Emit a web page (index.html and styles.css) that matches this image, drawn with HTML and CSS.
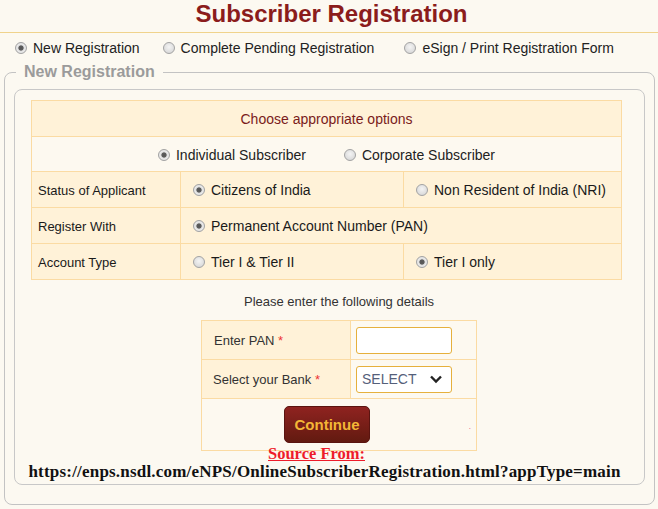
FILE: index.html
```html
<!DOCTYPE html>
<html lang="en">
<head>
<meta charset="utf-8">
<title>Subscriber Registration</title>
<link rel="stylesheet" href="styles.css">
</head>
<body>
<h1 class="title">Subscriber Registration</h1>
<div class="modes">
  <label class="opt m1"><input type="radio" name="mode" checked><span>New Registration</span></label>
  <label class="opt m2"><input type="radio" name="mode"><span>Complete Pending Registration</span></label>
  <label class="opt"><input type="radio" name="mode"><span>eSign / Print Registration Form</span></label>
</div>
<fieldset class="outer">
  <legend>New Registration</legend>
  <div class="inner">
    <table class="opts">
      <colgroup><col class="c1"><col class="c2"><col class="c3"></colgroup>
      <tr class="head"><td colspan="3">Choose appropriate options</td></tr>
      <tr class="light"><td colspan="3">
        <div class="pair">
          <label class="opt"><input type="radio" name="sub" checked><span>Individual Subscriber</span></label>
          <label class="opt"><input type="radio" name="sub"><span>Corporate Subscriber</span></label>
        </div>
      </td></tr>
      <tr>
        <td class="lbl">Status of Applicant</td>
        <td class="cho"><label class="opt"><input type="radio" name="st" checked><span>Citizens of India</span></label></td>
        <td class="cho"><label class="opt"><input type="radio" name="st"><span>Non Resident of India (NRI)</span></label></td>
      </tr>
      <tr>
        <td class="lbl">Register With</td>
        <td class="cho" colspan="2"><label class="opt"><input type="radio" name="rw" checked><span>Permanent Account Number (PAN)</span></label></td>
      </tr>
      <tr>
        <td class="lbl">Account Type</td>
        <td class="cho"><label class="opt"><input type="radio" name="at"><span>Tier I &amp; Tier II</span></label></td>
        <td class="cho"><label class="opt"><input type="radio" name="at" checked><span>Tier I only</span></label></td>
      </tr>
    </table>
    <div class="details">
      <p class="hint">Please enter the following details</p>
      <table class="pan">
        <colgroup><col class="p1"><col class="p2"></colgroup>
        <tr>
          <td class="plbl">Enter PAN <span class="req">*</span></td>
          <td class="pfld"><input class="txt" type="text"></td>
        </tr>
        <tr>
          <td class="plbl sb">Select your Bank <span class="req">*</span></td>
          <td class="pfld">
            <div class="sel"><span>SELECT</span>
              <svg width="14" height="10" viewBox="0 0 14 10"><path d="M2 2.5 L7 7.5 L12 2.5" fill="none" stroke="#222" stroke-width="2.4"/></svg>
            </div>
          </td>
        </tr>
        <tr class="btnrow">
          <td colspan="2"><div class="btnwrap"><button class="go" type="button">Continue</button><span class="dot">.</span></div></td>
        </tr>
      </table>
    </div>
    <p class="src"><u>Source From:</u></p>
    <p class="url">https://enps.nsdl.com/eNPS/OnlineSubscriberRegistration.html?appType=main</p>
  </div>
</fieldset>
</body>
</html>
```
FILE: styles.css
```css
html, body {
  margin: 0;
  background: #fcf9f1;
  font-family: "Liberation Sans", Arial, sans-serif;
  color: #222;
}
.title {
  margin: 0;
  font-size: 24px;
  line-height: 28px;
  font-weight: bold;
  text-align: center;
  color: #8b1c1c;
  padding: 0 0 4px 5px;
  border-bottom: 1px solid #f0d38c;
}
.modes {
  display: flex;
  align-items: center;
  height: 22px;
  margin-top: 4px;
  padding-left: 15px;
  font-size: 14px;
}
.opt {
  display: inline-flex;
  align-items: center;
  gap: 6px;
  white-space: nowrap;
}
.m1 { margin-right: 23px; }
.m2 { margin-right: 30px; }
input[type="radio"] {
  -webkit-appearance: none;
  appearance: none;
  margin: 0;
  width: 12px;
  height: 12px;
  border: 1px solid #a3a3a3;
  border-radius: 50%;
  background: radial-gradient(circle at 50% 40%, #f4f4f4 0, #dcdcdc 70%, #cfcfcf 100%);
  box-sizing: border-box;
  flex: none;
}
input[type="radio"]:checked {
  background: radial-gradient(circle, #555 0, #5d5d5d 2.2px, #d9d9d9 3px, #ececec 4px, #d0d0d0 100%);
}
.outer {
  margin: 4px 3px 0 4px;
  border: 1px solid #c3c3c3;
  border-radius: 8px;
  padding: 8px 9px 19px;
  min-width: 0;
}
.outer legend {
  margin-left: 2px;
  padding: 0 8px;
  font-size: 16px;
  line-height: 18px;
  font-weight: bold;
  color: #9b9b9b;
}
.inner {
  border: 1px solid #c8c8c8;
  border-radius: 8px;
  padding: 10px 14px 2px 16px;
}
.opts {
  width: 591px;
  border-collapse: collapse;
  table-layout: fixed;
}
.opts td, .pan td {
  border: 1px solid #fbdba3;
  background: #fff2d8;
  padding: 0;
}
.c1 { width: 149px; }
.c2 { width: 223px; }
.opts tr { height: 36px; }
.opts tr.head { height: 36px; }
.opts tr.light { height: 35px; }
.opts .head td {
  text-align: center;
  font-size: 14px;
  color: #7a1b1b;
}
.opts .light td {
  background: #fdf9f0;
}
.pair {
  display: flex;
  justify-content: center;
  gap: 38px;
  font-size: 14px;
  padding-top: 1px;
}
.lbl {
  font-size: 13px;
  padding: 1px 0 0 6px !important;
  color: #1a1a1a;
}
.cho {
  font-size: 14px;
  padding: 2px 0 0 12px !important;
  color: #1a1a1a;
}
.details {
  width: 276px;
  margin-left: 170px;
}
.hint {
  margin: 14px 0 10px;
  font-size: 13px;
  line-height: 16px;
  text-align: center;
  color: #333;
}
.pan {
  width: 276px;
  border-collapse: collapse;
  table-layout: fixed;
}
.p1 { width: 149px; }
.pan tr { height: 39px; }
.plbl {
  font-size: 13px;
  padding-left: 12px !important;
  color: #333;
}
.plbl.sb { padding-left: 11px !important; }
.req { color: #e33; }
.pan .pfld {
  background: #fdf9f0;
  padding-left: 5px !important;
}
.txt {
  display: block;
  box-sizing: border-box;
  width: 96px;
  height: 27px;
  margin: 0;
  border: 1px solid #e6b03c;
  border-radius: 3px;
  background: #fff;
  padding: 0 4px;
  font: 14px "Liberation Sans", Arial, sans-serif;
}
.sel {
  box-sizing: border-box;
  width: 96px;
  height: 27px;
  border: 1px solid #e6b03c;
  border-radius: 3px;
  background: #fff;
  display: flex;
  align-items: center;
  justify-content: space-between;
  padding: 0 8px 0 5px;
  font-size: 14px;
  color: #55607a;
}
.pan .btnrow { height: 52px; }
.pan .btnrow td { background: #fdf9f0; }
.btnwrap {
  display: flex;
  align-items: center;
  padding-left: 82px;
}
.go {
  width: 86px;
  height: 37px;
  border: 1px solid #5a1410;
  border-radius: 5px;
  background: linear-gradient(#8f2320, #621a10);
  color: #f3b636;
  font: bold 15px "Liberation Sans", Arial, sans-serif;
  padding: 0;
}
.dot {
  margin-left: auto;
  margin-right: 5px;
  color: #e8407a;
  font-size: 8px;
  line-height: 8px;
  padding-top: 4px;
}
.src {
  margin: -5px 0 0;
  padding-right: 28px;
  text-align: center;
  font-family: "Liberation Serif", "Times New Roman", serif;
  font-weight: bold;
  font-size: 16.5px;
  line-height: 16px;
  color: #ee1c2a;
}
.url {
  margin: 0 -14px 0 -16px;
  padding-right: 10px;
  text-align: center;
  font-family: "Liberation Serif", "Times New Roman", serif;
  font-weight: bold;
  font-size: 17px;
  line-height: 20px;
  letter-spacing: 0.2px;
  color: #111;
  white-space: nowrap;
}
```
